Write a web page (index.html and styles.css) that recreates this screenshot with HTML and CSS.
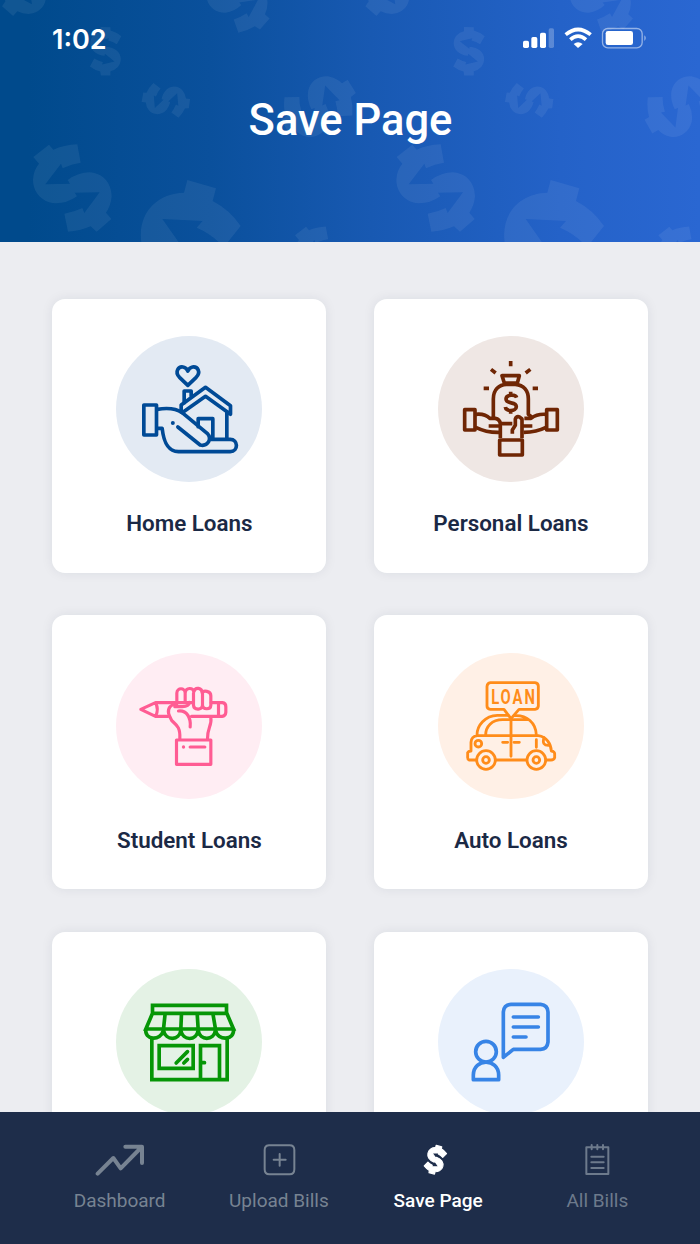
FILE: index.html
```html
<!DOCTYPE html>
<html lang="en">
<head>
    <meta charset="UTF-8">
    <meta name="viewport" content="width=device-width, initial-scale=1.0">
    <title>Save Page</title>
    <link rel="stylesheet" href="styles.css">
</head>
<body>

<header class="header">
    <svg class="header-pattern" viewBox="0 0 2100 726" aria-hidden="true">
        <defs>
            <path id="dollar" d="M-117-93L-70-130L-57-115Q-27-129 15-131L25-76Q-2-73-29-59L-34-73L-81-11L-7-13L-14-24Q18-47 51-47C93-45 118-13 118 25Q116 52 101 74L117 93L73 131L55 115Q23 129-13 131L-24 77Q5 72 30 60L36 75L82 13L7 14L14 25Q-17 47-52 46C-92 42-118 12-118-25Q-117-53-100-73Z"/>
            <g id="tile">
                <use href="#dollar" transform="translate(97 -50) rotate(82) scale(.76)"/>
                <use href="#dollar" transform="translate(711 -2) rotate(-8) scale(.76)"/>
                <use href="#dollar" transform="translate(316.5 153.5) rotate(40) scale(.497)"/>
                <use href="#dollar" transform="translate(497.5 301.5) rotate(-42) scale(.487)"/>
                <use href="#dollar" transform="translate(955 320) rotate(-81) scale(.8)"/>
                <use href="#dollar" transform="translate(217 564)"/>
                <use href="#dollar" transform="translate(967 771) scale(.7)"/>
                <path d="M424 728C412 640 470 580 552 578L562 540L648 565L638 603Q690 630 722 678L682 728H658Q630 700 590 683L608 663L487 657L537 728Z"/>
            </g>
        </defs>
        <use href="#tile"/>
        <use href="#tile" x="1090"/>
    </svg>

    <div class="status-bar">
        <span class="time">1:02</span>
        <svg class="status-icons" viewBox="0 0 372 66" aria-hidden="true">
            <g fill="#fff">
                <rect x="0" y="41" width="18" height="22" rx="5"/>
                <rect x="25" y="30" width="18" height="33" rx="5"/>
                <rect x="51" y="17" width="18" height="46" rx="5"/>
                <rect x="77" y="4" width="16" height="59" rx="5" opacity=".25"/>
                <path d="M165 63L152 51Q165 40 179 51Z"/>
                <rect x="248" y="12" width="82" height="42" rx="7"/>
                <path d="M364 25Q373 33 364 42Z" opacity=".5"/>
            </g>
            <g fill="none" stroke="#fff">
                <path d="M128 23Q165-8 203 23" stroke-width="11"/>
                <path d="M142 38Q165 17 189 38" stroke-width="11"/>
                <rect x="238.500" y="4.500" width="119" height="58" rx="16" stroke-width="4" opacity=".5"/>
            </g>
        </svg>
    </div>
    <h1>Save Page</h1>
</header>

<main class="content">
    <div class="card">
        <div class="icon home">
            <svg viewBox="17.5 18 438 438">
                <path d="M233 166L208 142C192 124 206 108 219 111Q229 113 233 123Q237 113 247 111C263 109 273 126 258 142Z"/>
                <path d="M101 225H139V315H101ZM222 218V183H243V198"/>
                <path d="M213 225L286 172L361 227V253L286 199L216 248L213 244ZM350 248V325M264 290V266H308V325"/>
                <path d="M141 238Q190 230 216 248L291 310C307 327 293 350 270 345L203 291M141 295H156C160 331 170 364 205 365H360C386 364 384 328 360 328H303"/>
                <circle class="dot" cx="188" cy="279" r="6"/>
            </svg>
        </div>
        <h2>Home Loans</h2>
    </div>

    <div class="card">
        <div class="icon personal">
            <svg viewBox="24 18 438 438">
                <path d="M242 93V109M183 118L197 129M301 118L287 129M161 175H177M308 175H324"/>
                <path d="M216 137H268L262 159H223ZM190 261V207C190 179 207 164 229 163H256C281 165 295 182 295 207V253L305 261"/>
                <path d="M260 203C256 192 228 193 228 207C228 224 259 213 259 230C259 245 227 245 226 231M242 185V196M242 239V251"/>
                <path d="M104 239H135V300H104ZM350 239H382V300H350Z"/>
                <path d="M137 253Q165 250 179 265H196Q209 267 211 281H247M137 292Q170 308 208 307M176 288H211V324M348 253Q321 251 303 265H283M348 292Q320 306 281 307M307 288H277"/>
                <path d="M247 311V300L256 286V267Q259 258 267 260L276 267V324M209 330H277V375H209Z"/>
            </svg>
        </div>
        <h2>Personal Loans</h2>
    </div>

    <div class="card">
        <div class="icon student">
            <svg viewBox="17.5 23 438 438">
                <path d="M200 172H136L92 192L136 213H174M136 172Q147 192 136 213M303 172H337Q347 173 347 184V201Q346 212 336 213H244M325 172V213"/>
                <path d="M200 172V143C201 126 224 126 225 143C227 125 250 126 251 140C255 123 276 127 276 143C279 134 302 136 302 151V180C301 194 278 193 277 180C276 196 251 194 250 180V143M225 143V171M277 143V180M200 172H250"/>
                <path d="M237 171Q238 183 216 184H194C210 174 188 174 179 185C169 199 178 213 185 226C196 238 211 242 209 280M205 197C230 194 243 218 240 245M302 217C306 239 291 249 292 280"/>
                <path d="M199 284H302V357H199ZM240 305H284"/>
                <circle class="dot" cx="220" cy="305" r="5"/>
            </svg>
        </div>
        <h2>Student Loans</h2>
    </div>

    <div class="card">
        <div class="icon auto">
            <svg viewBox="24 23 438 438">
                <path d="M181 112H315Q325 113 325 123V182Q324 191 315 192H267L243 220L222 192H181Q171 191 171 182V123Q172 113 181 112Z"/>
                <text x="248" y="175" textLength="177" transform="scale(.74 1)">LOAN</text>
                <path d="M234 210H202C165 211 141 241 141 269M244 223H218C185 223 167 244 167 269M244 223H292M252 211C291 208 318 233 319 269M243 220V333M138 344H117Q112 342 113 333V322Q115 318 123 317V291Q124 273 142 271H325C350 274 363 296 364 317Q375 318 374 328V337Q372 344 363 344H348M197 344H289"/>
                <path d="M218 291H233M252 291H268M319 283V306M342 277Q334 302 358 300"/>
                <circle cx="145" cy="295" r="10"/>
                <circle cx="168" cy="344" r="28"/>
                <circle cx="168" cy="344" r="10"/>
                <circle cx="319" cy="344" r="28"/>
                <circle cx="319" cy="344" r="10"/>
            </svg>
        </div>
        <h2>Auto Loans</h2>
    </div>

    <div class="card">
        <div class="icon business">
            <svg viewBox="17.5 28 438 438">
                <path d="M127 161V137H349V161M122 161H354M127 161L107 208H370L350 161M165 161L160 208M214 161L212 208M261 161L264 208M308 161L316 208"/>
                <path d="M107 208C102 242 151 246 160 212C167 245 208 243 212 212C218 245 259 244 264 212C270 244 310 244 316 212C323 245 374 243 370 208"/>
                <path d="M125 235V360H351V235M147 258H249V326H147ZM271 360V258H328V360"/>
                <path class="round" d="M198 310L232 276M221 310L232 299M276 309H283"/>
            </svg>
        </div>
    </div>

    <div class="card">
        <div class="icon advice">
            <svg viewBox="24 28 438 438">
                <path d="M220 293V157Q222 135 243 134H332Q353 136 354 157V247Q352 268 332 269H250ZM250 172H325M250 202H325M250 232H288"/>
                <circle cx="168" cy="276" r="31"/>
                <path d="M130 360V346C131 295 205 295 206 346V360Z"/>
            </svg>
        </div>
    </div>
</main>

<nav class="tabs">
    <a class="tab">
        <svg viewBox="0 0 150 96"><path d="M8 89L55 42L77 73L140 9M91 8H141V57" stroke-width="12"/></svg>
        <span>Dashboard</span>
    </a>
    <a class="tab">
        <svg viewBox="0 0 150 96"><path d="M44 4H107Q121 4 121 18V76Q121 91 107 91H46Q32 91 32 76V18Q32 4 46 4M77 30V65M59 47H95" stroke-width="6"/></svg>
        <span>Upload Bills</span>
    </a>
    <a class="tab active">
        <svg viewBox="0 0 150 96"><use href="#dollar" transform="translate(67 47) rotate(55) scale(.29)" stroke-width="12"/></svg>
        <span>Save Page</span>
    </a>
    <a class="tab dim">
        <svg viewBox="0 0 150 96"><path d="M43 10H109V90H43ZM59 3V16M76 3V16M93 3V16M58 38H95M58 55H95M58 72H95" stroke-width="6"/></svg>
        <span>All Bills</span>
    </a>
</nav>

</body>
</html>
```
FILE: styles.css
```css
* {
    box-sizing: border-box;
}
body {
    display: flex;
    flex-direction: column;
    width: 700px;
    height: 1244px;
    margin: 0;
    overflow: hidden;
    background-color: #ecedf1;
    font-family: Roboto, sans-serif;
}
.header {
    position: relative;
    flex: none;
    height: 242px;
    overflow: hidden;
    background: linear-gradient(90deg, #004a8c 4%, #0a509c 30%, #1859b2 53%, #2462c8 80%, #2a67d2 100%);
    color: #fff;
}
.header-pattern {
    position: absolute;
    top: 0;
    left: 0;
    width: 700px;
    height: 242px;
    fill: rgba(255, 255, 255, 0.065);
}
.status-bar {
    position: relative;
    display: flex;
    justify-content: space-between;
    padding: 20px 53px 0 52px;
    height: 92px;
}
.time {
    font-family: Inter, sans-serif;
    font-size: 27px;
    font-weight: 600;
    line-height: 39px;
}
.status-icons {
    width: 124px;
    height: 22px;
    margin-top: 7px;
}
h1 {
    position: relative;
    margin: 0;
    font-size: 43.5px;
    font-weight: 500;
    line-height: 58px;
    text-align: center;
    text-indent: 1px;
}
.content {
    flex: 1;
    min-height: 0;
    overflow: hidden;
    display: grid;
    grid-template-columns: 274px 274px;
    grid-auto-rows: 274px;
    gap: 42.5px 47.6px;
    padding: 56.5px 52px 0 52.4px;
}
.card {
    display: flex;
    flex-direction: column;
    align-items: center;
    padding-top: 37.5px;
    border-radius: 13px;
    background-color: #fff;
    box-shadow: 0 0 12px rgba(30, 40, 70, 0.08);
}
.icon {
    width: 146px;
    height: 146px;
    border-radius: 50%;
}
.icon svg {
    display: block;
    width: 146px;
    height: 146px;
    fill: none;
    stroke: currentColor;
    stroke-width: 11;
    stroke-linejoin: round;
    stroke-linecap: round;
}
.icon .dot,
.icon text {
    fill: currentColor;
    stroke: none;
}
.icon text {
    font-size: 60px;
    font-weight: 700;
}
.home {
    background-color: #e3eaf3;
    color: #004a96;
}
.personal {
    background-color: #efe7e4;
    color: #6f2604;
}
.personal svg {
    stroke-linecap: butt;
}
.student {
    background-color: #ffedf3;
    color: #ff5c93;
}
.student svg {
    stroke-width: 9.5;
}
.auto {
    background-color: #fff0e6;
    color: #ff8c1a;
}
.auto svg {
    stroke-width: 8.5;
}
.business {
    background-color: #e4f2e5;
    color: #069606;
}
.business svg {
    stroke-linecap: butt;
    stroke-linejoin: miter;
}
.business .round {
    stroke-linecap: round;
}
.advice {
    background-color: #e9f1fc;
    color: #3784e6;
}
h2 {
    margin: 26px 0 0;
    color: #1b2945;
    font-size: 22.4px;
    font-weight: 600;
    line-height: 30px;
}
.tabs {
    flex: none;
    display: grid;
    grid-template-columns: repeat(4, 1fr);
    height: 132px;
    padding: 32px 23px 0 40px;
    background-color: #1e2d4a;
}
.tab {
    display: flex;
    flex-direction: column;
    align-items: center;
    gap: 11px;
    color: #778392;
    font-size: 19px;
    line-height: 27px;
}
.tab svg {
    width: 50px;
    height: 32px;
    fill: none;
    stroke: currentColor;
    stroke-linecap: round;
    stroke-linejoin: round;
}
.tab.active {
    color: #fff;
    font-weight: 500;
}
.tab.active svg {
    fill: currentColor;
}
.tab.dim {
    color: #6d7a8c;
}
```
